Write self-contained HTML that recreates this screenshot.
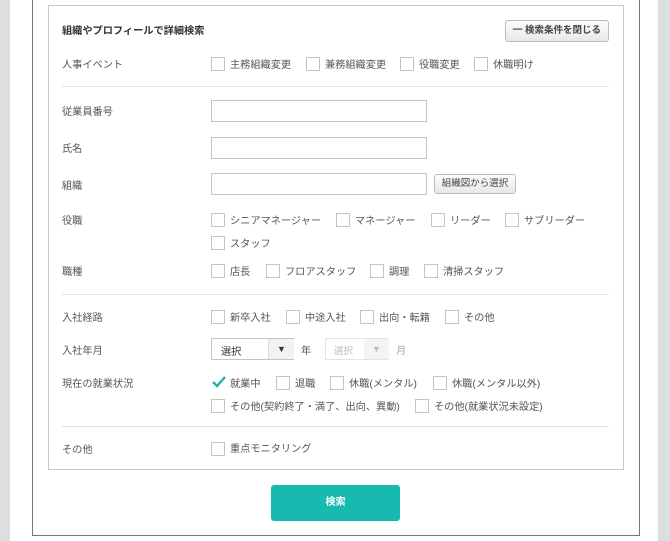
<!DOCTYPE html>
<html><head><meta charset="utf-8"><style>
*{box-sizing:border-box;margin:0;padding:0}
body{width:670px;height:541px;background:#fff;position:relative;overflow:hidden;font-family:"Liberation Sans","Noto Sans CJK JP",sans-serif;font-size:10.2px;color:#555}
.gl{position:absolute;left:0;top:0;width:10px;height:541px;background:#dcdee0}
.gr{position:absolute;left:658px;top:0;width:12px;height:541px;background:#dcdee0}
.outer{position:absolute;left:32px;top:-2px;width:608px;height:538px;border:1px solid #777;border-top:none}
.inner{position:absolute;left:48px;top:5px;width:576px;height:465px;border:1px solid #c8c8c8}
.a{position:absolute;white-space:nowrap;margin-top:-1px}
.cb{position:absolute;width:14px;height:14px;border:1px solid #c4c4c4;background:#fff}
.hr{position:absolute;left:62px;width:547px;height:1px;background:#e2e2e2}
.in{position:absolute;left:211px;width:216px;height:22px;border:1px solid #c4c4c4;background:#fff}
.btn{position:absolute;border:1px solid #bbb;border-radius:3px;background:linear-gradient(#fdfdfd,#e8e8e8);color:#444;text-align:center}
</style></head><body>
<div class="gl"></div><div class="gr"></div>
<div class="outer"></div>
<div class="inner"></div>
<div class="a" style="left:62px;top:23px;color:#333;font-weight:bold">組織やプロフィールで詳細検索</div>
<div class="btn" style="left:505px;top:20px;width:104px;height:22px;line-height:20px;font-size:9.5px;font-weight:bold">━ 検索条件を閉じる</div>

<div class="a" style="left:62px;top:57px">人事イベント</div>
<div class="cb" style="left:211px;top:57px"></div><div class="a" style="left:230px;top:57px">主務組織変更</div>
<div class="cb" style="left:306px;top:57px"></div><div class="a" style="left:325px;top:57px">兼務組織変更</div>
<div class="cb" style="left:400px;top:57px"></div><div class="a" style="left:419px;top:57px">役職変更</div>
<div class="cb" style="left:474px;top:57px"></div><div class="a" style="left:493px;top:57px">休職明け</div>
<div class="hr" style="top:86px"></div>

<div class="a" style="left:62px;top:104px">従業員番号</div><div class="in" style="top:100px"></div>
<div class="a" style="left:62px;top:141px">氏名</div><div class="in" style="top:137px"></div>
<div class="a" style="left:62px;top:178px">組織</div><div class="in" style="top:173px"></div>
<div class="btn" style="left:434px;top:174px;width:82px;height:20px;line-height:18px;font-size:9.5px">組織図から選択</div>

<div class="a" style="left:62px;top:213px">役職</div>
<div class="cb" style="left:211px;top:213px"></div><div class="a" style="left:230px;top:213px">シニアマネージャー</div>
<div class="cb" style="left:336px;top:213px"></div><div class="a" style="left:355px;top:213px">マネージャー</div>
<div class="cb" style="left:431px;top:213px"></div><div class="a" style="left:450px;top:213px">リーダー</div>
<div class="cb" style="left:505px;top:213px"></div><div class="a" style="left:524px;top:213px">サブリーダー</div>
<div class="cb" style="left:211px;top:236px"></div><div class="a" style="left:230px;top:236px">スタッフ</div>

<div class="a" style="left:62px;top:264px">職種</div>
<div class="cb" style="left:211px;top:264px"></div><div class="a" style="left:230px;top:264px">店長</div>
<div class="cb" style="left:266px;top:264px"></div><div class="a" style="left:285px;top:264px">フロアスタッフ</div>
<div class="cb" style="left:370px;top:264px"></div><div class="a" style="left:389px;top:264px">調理</div>
<div class="cb" style="left:424px;top:264px"></div><div class="a" style="left:443px;top:264px">清掃スタッフ</div>
<div class="hr" style="top:294px"></div>

<div class="a" style="left:62px;top:310px">入社経路</div>
<div class="cb" style="left:211px;top:310px"></div><div class="a" style="left:230px;top:310px">新卒入社</div>
<div class="cb" style="left:286px;top:310px"></div><div class="a" style="left:305px;top:310px">中途入社</div>
<div class="cb" style="left:360px;top:310px"></div><div class="a" style="left:379px;top:310px">出向・転籍</div>
<div class="cb" style="left:445px;top:310px"></div><div class="a" style="left:464px;top:310px">その他</div>

<div class="a" style="left:62px;top:343px">入社年月</div>
<div style="position:absolute;left:211px;top:338px;width:83px;height:22px;border:1px solid #c4c4c4"><span class="a" style="left:9px;top:5px;color:#333">選択</span><div style="position:absolute;left:56px;top:0;width:1px;height:20px;background:#ddd"></div><div style="position:absolute;left:57px;top:0;width:25px;height:20px;background:#f2f2f2;text-align:center;line-height:20px;font-size:9px;color:#333">▼</div></div>
<div class="a" style="left:301px;top:343px">年</div>
<div style="position:absolute;left:325px;top:338px;width:64px;height:22px;border:1px solid #e4e4e4"><span class="a" style="left:8px;top:5px;color:#bbb;font-size:9.5px">選択</span><div style="position:absolute;left:38px;top:0;width:25px;height:20px;background:#f4f4f4;text-align:center;line-height:20px;font-size:9px;color:#bbb">▼</div></div>
<div class="a" style="left:396px;top:343px;color:#aaa">月</div>

<div class="a" style="left:62px;top:376px">現在の就業状況</div>
<svg style="position:absolute;left:211px;top:374px" width="16" height="16"><path d="M2 8 L6 12 L14 3" stroke="#1fb5ac" stroke-width="2.4" fill="none"/></svg>
<div class="a" style="left:230px;top:376px">就業中</div>
<div class="cb" style="left:276px;top:376px"></div><div class="a" style="left:295px;top:376px">退職</div>
<div class="cb" style="left:330px;top:376px"></div><div class="a" style="left:349px;top:376px">休職(メンタル)</div>
<div class="cb" style="left:433px;top:376px"></div><div class="a" style="left:452px;top:376px">休職(メンタル以外)</div>
<div class="cb" style="left:211px;top:399px"></div><div class="a" style="left:230px;top:399px">その他(契約終了・満了、出向、異動)</div>
<div class="cb" style="left:415px;top:399px"></div><div class="a" style="left:434px;top:399px">その他(就業状況未設定)</div>
<div class="hr" style="top:426px"></div>

<div class="a" style="left:62px;top:442px">その他</div>
<div class="cb" style="left:211px;top:442px"></div><div class="a" style="left:230px;top:441px">重点モニタリング</div>

<div style="position:absolute;left:271px;top:485px;width:129px;height:36px;background:#17bab0;border-radius:3px;color:#fff;font-weight:bold;text-align:center;line-height:36px">検索</div>
</body></html>
